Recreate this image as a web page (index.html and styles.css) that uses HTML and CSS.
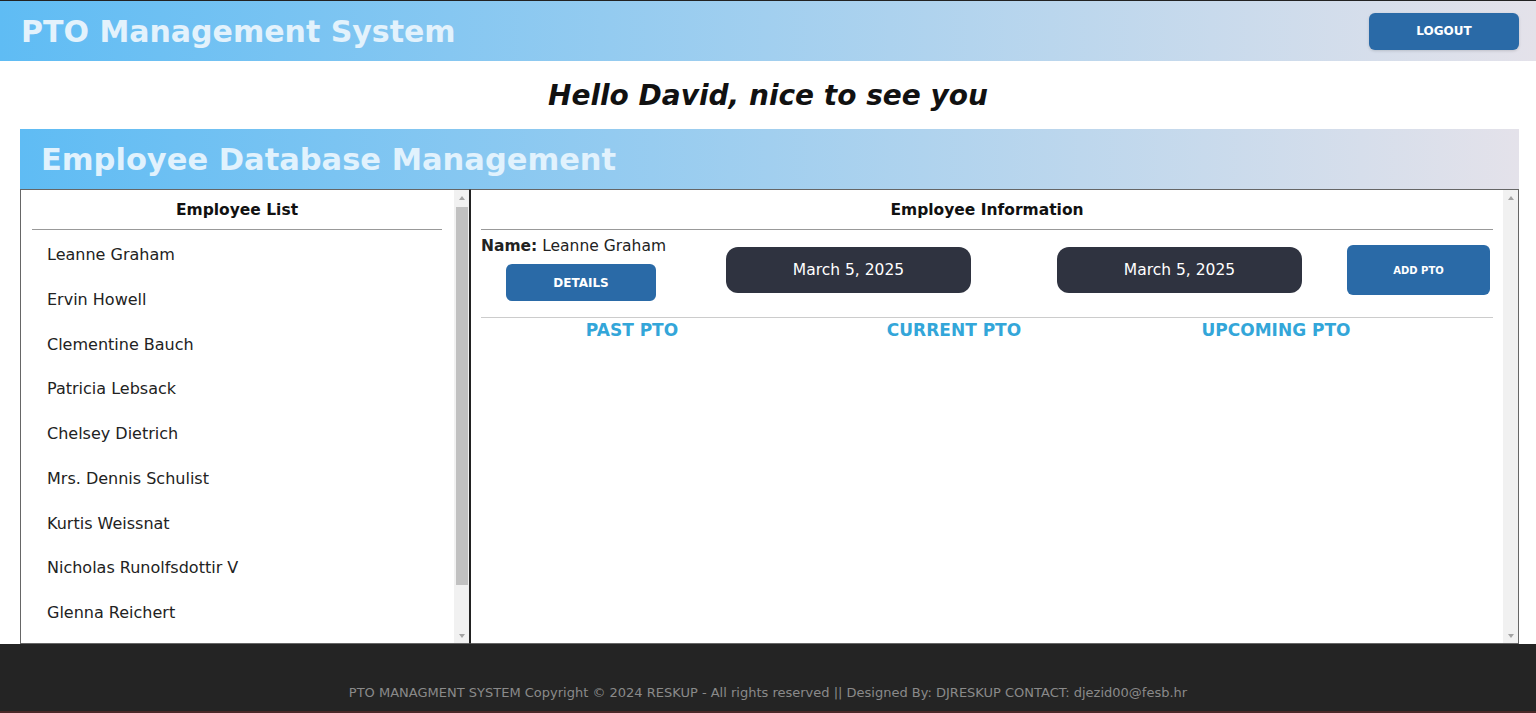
FILE: index.html
```html
<!DOCTYPE html>
<html lang="en">
<head>
    <meta charset="utf-8" />
    <meta name="viewport" content="width=device-width, initial-scale=1" />
    <title>PTO Management System</title>
    <link rel="stylesheet" href="styles.css">
</head>
<body>
    <header class="topbar">
        <h1 class="app-title">PTO Management System</h1>
        <button class="btn logout-btn">LOGOUT</button>
    </header>

    <h2 class="greeting">Hello David, nice to see you</h2>

    <section class="database">
        <div class="database-header">
            <h2>Employee Database Management</h2>
        </div>
        <div class="panels">
            <div class="panel list-panel">
                <div class="panel-body">
                    <h3 class="panel-title">Employee List</h3>
                    <ul class="employee-list">
                        <li>Leanne Graham</li>
                        <li>Ervin Howell</li>
                        <li>Clementine Bauch</li>
                        <li>Patricia Lebsack</li>
                        <li>Chelsey Dietrich</li>
                        <li>Mrs. Dennis Schulist</li>
                        <li>Kurtis Weissnat</li>
                        <li>Nicholas Runolfsdottir V</li>
                        <li>Glenna Reichert</li>
                    </ul>
                </div>
                <div class="scrollbar">
                    <span class="arrow up"></span>
                    <div class="track"><div class="thumb"></div></div>
                    <span class="arrow down"></span>
                </div>
            </div>
            <div class="panel info-panel">
                <div class="panel-body">
                    <h3 class="panel-title">Employee Information</h3>
                    <div class="info-row">
                        <div class="name-block">
                            <p class="name"><b>Name:</b> Leanne Graham</p>
                            <button class="btn details-btn">DETAILS</button>
                        </div>
                        <div class="date-pill">March 5, 2025</div>
                        <div class="date-pill second">March 5, 2025</div>
                        <button class="btn add-btn">ADD PTO</button>
                    </div>
                    <div class="pto-row">
                        <h4>PAST PTO</h4>
                        <h4>CURRENT PTO</h4>
                        <h4>UPCOMING PTO</h4>
                    </div>
                </div>
                <div class="scrollbar">
                    <span class="arrow up"></span>
                    <div class="track"></div>
                    <span class="arrow down"></span>
                </div>
            </div>
        </div>
    </section>

    <footer class="footer">
        PTO MANAGMENT SYSTEM Copyright &copy; 2024 RESKUP - All rights reserved || Designed By: DJRESKUP CONTACT: djezid00@fesb.hr
    </footer>
</body>
</html>
```

FILE: styles.css
```css
body {
    margin: 0;
    font-family: "DejaVu Sans", Verdana, sans-serif;
    background-color: #fff;
    color: #111;
}

.topbar {
    display: flex;
    justify-content: space-between;
    align-items: center;
    height: 60px;
    padding: 0 17px 0 21px;
    border-top: 1px solid #222;
    background: linear-gradient(to right, #5fbcf4, #e4e2ea);
}

.app-title {
    margin: 0;
    font-size: 30px;
    font-weight: 700;
    color: #e3f2fc;
}

.btn {
    border: none;
    border-radius: 6px;
    background-color: #2a6aa7;
    color: #fff;
    font-family: inherit;
    font-weight: 700;
    cursor: pointer;
}

.logout-btn {
    width: 150px;
    height: 37px;
    font-size: 12px;
    box-shadow: 0 1px 3px rgba(0, 0, 0, 0.15);
}

.greeting {
    margin: 0;
    padding: 18px 0 17px;
    text-align: center;
    font-size: 28px;
    font-style: italic;
    font-weight: 700;
}

.database {
    margin: 0 17px 0 20px;
}

.database-header {
    height: 60px;
    display: flex;
    align-items: center;
    padding-left: 21px;
    background: linear-gradient(to right, #5fbcf4, #e4e2ea);
}

.database-header h2 {
    margin: 0;
    font-size: 30.5px;
    font-weight: 700;
    color: #e1f2fd;
}

.panels {
    display: flex;
    height: 455px;
}

.panel {
    display: flex;
    overflow: hidden;
    border: 1px solid #666;
    box-sizing: border-box;
}

.panel-body {
    flex: 1;
    overflow: hidden;
}

.list-panel {
    width: 450px;
    border-right: 1px solid #222;
}

.list-panel .panel-body {
    padding: 0 12px 0 11px;
}

.info-panel {
    flex: 1;
    border-left: 1px solid #222;
}

.info-panel .panel-body {
    padding: 0 10px;
}

/* fake classic scrollbar */
.scrollbar {
    width: 15px;
    display: flex;
    flex-direction: column;
    background-color: #f1f1f1;
}

.arrow {
    height: 15px;
    display: flex;
    justify-content: center;
    align-items: center;
}

.arrow::before {
    content: "";
    border-left: 3.5px solid transparent;
    border-right: 3.5px solid transparent;
}

.arrow.up::before {
    border-bottom: 4px solid #a3a3a3;
}

.arrow.down::before {
    border-top: 4px solid #a3a3a3;
}

.track {
    flex: 1;
}

.thumb {
    height: 378px;
    margin: 2px 1px 0 2px;
    background-color: #c1c1c1;
}

.panel-title {
    margin: 0;
    padding: 11px 0 10px;
    text-align: center;
    font-size: 15.5px;
    font-weight: 700;
    border-bottom: 1px solid #999;
}

.employee-list {
    list-style: none;
    margin: 0;
    padding: 3px 0 12px;
}

.employee-list li {
    padding: 12px 15px;
    font-size: 16px;
    line-height: 20.75px;
    color: #222;
}

.info-row {
    display: flex;
    align-items: flex-start;
    padding: 6px 0 16px;
    border-bottom: 1px solid #ccc;
}

.name-block {
    width: 190px;
}

.name {
    margin: 0;
    font-size: 15.5px;
    line-height: 20px;
    white-space: nowrap;
    color: #222;
}

.details-btn {
    margin: 8px 0 0 25px;
    width: 150px;
    height: 37px;
    font-size: 12px;
}

.date-pill {
    margin: 11px 0 0 55px;
    width: 245px;
    height: 46px;
    display: flex;
    justify-content: center;
    align-items: center;
    border-radius: 12px;
    background-color: #2f3340;
    color: #fff;
    font-size: 15.5px;
}

.date-pill.second {
    margin-left: 86px;
}

.add-btn {
    margin: 9px 0 0 45px;
    width: 143px;
    height: 50px;
    font-size: 10px;
}

.pto-row {
    display: grid;
    grid-template-columns: repeat(3, 322px);
    margin-left: -10px;
}

.pto-row h4 {
    margin: 0;
    padding-top: 2px;
    text-align: center;
    font-size: 17px;
    font-weight: 700;
    color: #33a6d9;
}

.footer {
    height: 69px;
    box-sizing: border-box;
    padding-top: 41px;
    text-align: center;
    font-size: 13px;
    color: #8a8a8a;
    background-color: #242424;
    border-bottom: 2px solid #4a2828;
}
```
